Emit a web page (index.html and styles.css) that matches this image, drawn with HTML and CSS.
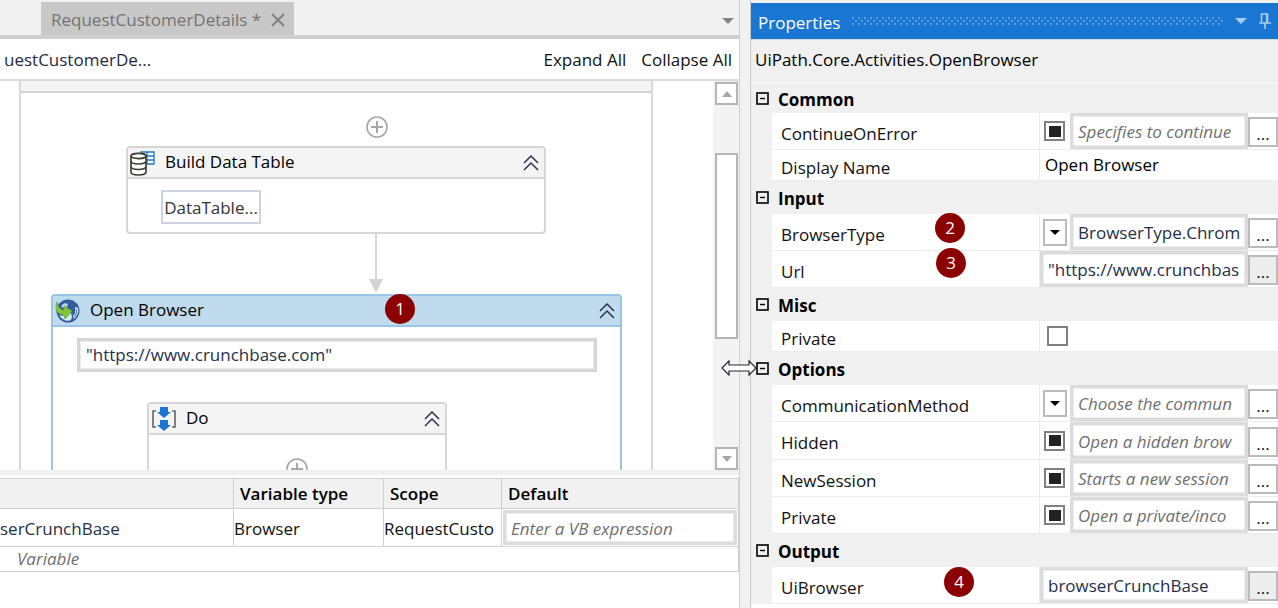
FILE: index.html
```html
<!DOCTYPE html>
<html lang="en">
<head>
<meta charset="utf-8">
<title>Workflow designer</title>
<link rel="stylesheet" href="styles.css">
</head>
<body>
<svg class="defs" aria-hidden="true">
  <symbol id="collapse" viewBox="0 0 16 16"><path d="M1 8 8 1 15 8M1 15 8 8 15 15" fill="none" stroke="#29344f" stroke-width="1.500"/></symbol>
  <symbol id="plus" viewBox="0 0 24 24"><circle cx="12" cy="12" r="10" fill="#fff" stroke="#a6a6a6" stroke-width="1.600"/><path d="M6 12h12M12 6v12" stroke="#a6a6a6" stroke-width="2"/></symbol>
  <symbol id="expander" viewBox="0 0 13 13"><rect x="1" y="1" width="11" height="11" fill="#f0f0f0" stroke="#000" stroke-width="1.600"/><path d="M4 6.500h5" stroke="#000" stroke-width="1.400"/></symbol>
</svg>
<div class="app">
  <main class="designer">
    <div class="tabs">
      <div class="tab"><span>RequestCustomerDetails *</span>
        <button class="plain" aria-label="Close"><svg width="14" height="14" viewBox="0 0 14 14"><path d="M1 1 13 13M13 1 1 13" stroke="#858585" stroke-width="2.200"/></svg></button>
      </div>
      <button class="plain" aria-label="Open tabs"><svg width="12" height="6"><path d="M0 0h12L6 6z" fill="#858585"/></svg></button>
    </div>
    <div class="toolbar">
      <a class="crumb" href="#">uestCustomerDe...</a>
      <button class="plain">Expand All</button>
      <button class="plain">Collapse All</button>
    </div>
    <div class="canvas">
      <div class="viewport">
        <section class="sequence">
          <div class="sequence-head"></div>
          <div class="insert"><button class="plain" aria-label="Add activity"><svg width="24" height="24"><use href="#plus"/></svg></button></div>
          <article class="card data-card">
            <header class="card-head">
              <svg class="card-icon" width="26" height="26" viewBox="0 0 26 26">
                <g fill="#fff" stroke="#1b7ac2"><path d="M11 2h13v12H11zM17 2v12M11 6h13M11 10h13" stroke-width="1.300"/></g>
                <path d="M1 6v16c0 4 15 4 15 0V6" fill="#fff" stroke="#3d3b30" stroke-width="1.600"/>
                <ellipse cx="8.500" cy="6" rx="7.500" ry="2.600" fill="#fff" stroke="#3d3b30" stroke-width="1.600"/>
                <path d="M1 11c0 4 15 4 15 0M1 16.500c0 4 15 4 15 0" fill="none" stroke="#3d3b30" stroke-width="1.600"/>
              </svg>
              <span class="card-title">Build Data Table</span>
              <button class="plain" aria-label="Collapse"><svg width="16" height="16"><use href="#collapse"/></svg></button>
            </header>
            <button class="data-button">DataTable...</button>
          </article>
          <div class="arrow"><svg width="14" height="60"><path d="M7 0v46" stroke="#d6d6d6" stroke-width="2"/><path d="M0 45h14L7 59z" fill="#d4d4d4"/></svg></div>
          <article class="card browser-card">
            <header class="card-head selected">
              <svg class="card-icon" width="26" height="26" viewBox="0 0 26 26">
                <circle cx="13" cy="13" r="11.500" fill="#315c9d"/>
                <path d="M7 7c2-2 4-2 6-1l-1 3-3 1-3-1z" fill="#b9d3ea"/>
                <path d="M4 17c3 2 6 0 10-3l2 1 1 4-1 3c-4 2-9 0-12-5zM20 9l3 1c1 5-1 8-4 11l-1-3 2-3z" fill="#d7e8f3"/>
                <path d="M21 11c1 4 0 6-2 8" fill="none" stroke="#315c9d"/>
                <path d="M2 4c-3 8 1 13 7 13l1 4 7-8-8-5v4C5 12 3 9 2 4z" fill="#86c440" stroke="#5ba32b" stroke-width=".7"/>
              </svg>
              <span class="card-title">Open Browser</span>
              <span class="badge badge-browser">1</span>
              <button class="plain" aria-label="Collapse"><svg width="16" height="16"><use href="#collapse"/></svg></button>
            </header>
            <div class="browser-body">
              <input class="box url-box" aria-label="Address" value="&quot;https://www.crunchbase.com&quot;">
              <article class="card do-card">
                <header class="card-head">
                  <svg class="card-icon" width="26" height="26" viewBox="0 0 26 26">
                    <path d="M5 5H2v16h3M21 5h3v16h-3" fill="none" stroke="#6b6b6b" stroke-width="1.700"/>
                    <path d="M9 1h8v5h3l-7 6-7-6h3zM9 14h8v5h3l-7 6-7-6h3z" fill="#1976d4"/>
                  </svg>
                  <span class="card-title">Do</span>
                  <button class="plain" aria-label="Collapse"><svg width="16" height="16"><use href="#collapse"/></svg></button>
                </header>
                <div class="insert-inner"><button class="plain" aria-label="Add activity"><svg width="24" height="24"><use href="#plus"/></svg></button></div>
              </article>
            </div>
          </article>
        </section>
      </div>
      <div class="scrollbar">
        <button class="scroll-button" aria-label="Scroll up"><svg width="10" height="6"><path d="M0 6h10L5 0z" fill="#a6a6a6"/></svg></button>
        <div class="track"><div class="thumb"></div></div>
        <button class="scroll-button" aria-label="Scroll down"><svg width="10" height="6"><path d="M0 0h10L5 6z" fill="#a6a6a6"/></svg></button>
      </div>
    </div>
    <div class="variables">
      <table>
        <colgroup><col><col class="col-type"><col class="col-scope"><col class="col-default"></colgroup>
        <thead><tr><th></th><th>Variable type</th><th>Scope</th><th>Default</th></tr></thead>
        <tbody>
          <tr class="variable"><td class="ink">serCrunchBase</td><td>Browser</td><td>RequestCusto</td><td class="default-cell"><input class="box" aria-label="Default" placeholder="Enter a VB expression"></td></tr>
          <tr class="create"><td colspan="4">Variable</td></tr>
        </tbody>
      </table>
    </div>
  </main>
  <div class="splitter">
    <svg class="resize" width="36" height="18" viewBox="0 0 36 18"><path d="M1 9 8 2v4h20V2l7 7-7 7v-4H8v4z" fill="#fff" stroke="#29293a" stroke-width="1.200"/></svg>
  </div>
  <aside class="properties">
    <header class="panel-head">
      <h1>Properties</h1>
      <svg class="grip" height="8"><pattern id="dots" width="6" height="6" patternUnits="userSpaceOnUse"><path d="M0 0h2v2H0zM3 3h2v2H3z" fill="#5d9fdf"/></pattern><rect width="100%" height="8" fill="url(#dots)"/></svg>
      <button class="plain" aria-label="Menu"><svg width="12" height="6"><path d="M0 0h12L6 6z" fill="#a9cdf0"/></svg></button>
      <button class="plain" aria-label="Pin"><svg width="12" height="16" viewBox="0 0 12 16"><path d="M2.500 9V1h6v8M0 10h12M6 10v6" fill="none" stroke="#a9cdf0" stroke-width="1.600"/><path d="M8 1v9" stroke="#a9cdf0" stroke-width="2"/></svg></button>
    </header>
    <div class="type-name">UiPath.Core.Activities.OpenBrowser</div>

    <h2 class="group"><svg width="13" height="13"><use href="#expander"/></svg><span>Common</span></h2>
    <div class="prop"><label class="name" for="p1">ContinueOnError</label><div class="value"><input type="checkbox" class="check mixed" aria-label="ContinueOnError state"><input id="p1" class="box" placeholder="Specifies to continue"><button class="more">...</button></div></div>
    <div class="prop short"><label class="name" for="p2">Display Name</label><div class="value"><input id="p2" class="bare" value="Open Browser"></div></div>

    <h2 class="group"><svg width="13" height="13"><use href="#expander"/></svg><span>Input</span></h2>
    <div class="prop"><label class="name" for="p3">BrowserType<span class="badge badge-type">2</span></label><div class="value"><button class="drop" aria-label="Choose BrowserType"><svg width="10" height="5"><path d="M0 0h10L5 5z"/></svg></button><input id="p3" class="box" value="BrowserType.Chrom"><button class="more">...</button></div></div>
    <div class="prop"><label class="name" for="p4">Url<span class="badge badge-url">3</span></label><div class="value"><input id="p4" class="box" value="&quot;https://www.crunchbas"><button class="more filled">...</button></div></div>

    <h2 class="group"><svg width="13" height="13"><use href="#expander"/></svg><span>Misc</span></h2>
    <div class="prop short"><label class="name" for="p5">Private</label><div class="value"><input id="p5" type="checkbox" class="check"></div></div>

    <h2 class="group"><svg width="13" height="13"><use href="#expander"/></svg><span>Options</span></h2>
    <div class="prop"><label class="name" for="p6">CommunicationMethod</label><div class="value"><button class="drop" aria-label="Choose CommunicationMethod"><svg width="10" height="5"><path d="M0 0h10L5 5z"/></svg></button><input id="p6" class="box" placeholder="Choose the commun"><button class="more">...</button></div></div>
    <div class="prop tall"><label class="name" for="p7">Hidden</label><div class="value"><input type="checkbox" class="check mixed" aria-label="Hidden state"><input id="p7" class="box" placeholder="Open a hidden brow"><button class="more">...</button></div></div>
    <div class="prop"><label class="name" for="p8">NewSession</label><div class="value"><input type="checkbox" class="check mixed" aria-label="NewSession state"><input id="p8" class="box" placeholder="Starts a new session"><button class="more">...</button></div></div>
    <div class="prop"><label class="name" for="p9">Private</label><div class="value"><input type="checkbox" class="check mixed" aria-label="Private state"><input id="p9" class="box" placeholder="Open a private/inco"><button class="more">...</button></div></div>

    <h2 class="group"><svg width="13" height="13"><use href="#expander"/></svg><span>Output</span></h2>
    <div class="prop"><label class="name" for="p10">UiBrowser<span class="badge badge-output">4</span></label><div class="value"><input id="p10" class="box" value="browserCrunchBase"><button class="more filled">...</button></div></div>
    <div class="rest"></div>
  </aside>
</div>
</body>
</html>
```
FILE: styles.css
```css
* { box-sizing: border-box; }
body { margin: 0; font: 17px/24px "Open Sans", "Noto Sans", sans-serif; color: #111; background: #f0f0f0; }
button, input { font: inherit; color: inherit; margin: 0; border-radius: 0; }
svg { display: block; flex: none; }
.defs { position: absolute; width: 0; height: 0; }
.plain { border: 0; padding: 0; background: none; flex: none; }
.app { display: grid; grid-template-columns: minmax(0, 1fr) 10px 528px; height: 100vh; overflow: hidden; }

.designer { display: flex; flex-direction: column; min-width: 0; min-height: 0; border-right: 1px solid #cfcfcf; background: #fff; }
.tabs { display: flex; align-items: flex-end; justify-content: space-between; flex: none; height: 39px; padding: 2px 5px 0 41px; background: #f1f1f1; border-bottom: 4px solid #cecece; }
.tabs > .plain { align-self: center; padding-top: 4px; }
.tab { display: flex; align-items: center; gap: 10px; height: 33px; padding: 3px 9px 0 10px; color: #737373; background: #c8c8c8; }
.toolbar { display: flex; align-items: center; gap: 15px; flex: none; height: 42px; padding: 2px 7px 0 4px; border-bottom: 2px solid #d9d9d9; }
.crumb { margin-right: auto; color: #1f2a44; text-decoration: none; }

.canvas { display: flex; flex: 1; min-height: 0; }
.viewport { flex: 1; min-width: 0; overflow: hidden; padding: 0 60px 0 19px; }
.sequence { min-height: 100%; border: solid #d9d9d9; border-width: 0 2px; padding-bottom: 20px; }
.sequence-head { height: 12px; background: #f4f4f4; border-bottom: 2px solid #d3d3d3; }
.insert { display: flex; justify-content: center; padding: 22px 0 7px 81px; }
.card { border: 2px solid #d6d6d6; border-radius: 4px; background: #fff; }
.card-head { position: relative; display: flex; align-items: center; height: 31px; padding: 0 5px 0 2px; background: #f4f4f4; border-bottom: 2px solid #d6d6d6; }
.card-title { flex: 1; margin: -2px 0 0 9px; color: #000; }
.data-card { width: 420px; height: 88px; margin: 0 auto; }
.data-button { display: block; margin: 11px 0 0 33px; width: 100px; height: 34px; padding: 2px 0 0; border: 2px solid #cdd3e3; background: #fff; color: #333; white-space: nowrap; }
.arrow { display: flex; justify-content: center; padding-left: 79px; }
.browser-card { margin: 0 29px 0 30px; border-color: #9ac5e4; }
.card-head.selected { background: #c1dbee; border-color: #9ac5e4; }
.browser-body { padding: 11px 23px 40px 24px; }
.do-card { width: 300px; margin: 30px auto 0 70px; }
.insert-inner { display: flex; justify-content: center; padding: 22px 0 80px; }

.box { display: block; flex: 1; width: 100%; min-width: 0; padding: 0 5px; border: 3px solid #dcdcdc; box-shadow: inset 0 0 0 1px #ececec; background: #fff; color: #24304a; outline: 0; }
.url-box { height: 34px; padding: 0 6px 2px; border-color: #d6d6d6; }
.box::placeholder { color: #6f6f6f; font-style: italic; opacity: 1; }

.scrollbar { display: flex; flex-direction: column; flex: none; width: 26px; padding: 1px 1px 0 2px; background: #f3f3f3; }
.scroll-button { display: grid; place-items: center; width: 23px; height: 23px; padding: 0; border: 2px solid #b5b5b5; background: #fff; }
.track { flex: 1; display: grid; grid-template-rows: 48fr 186fr 108fr; }
.thumb { grid-row: 2; width: 23px; border: 2px solid #b5b5b5; background: #fff; }

.variables { flex: none; height: 138px; border-top: 5px solid #f0f0f0; padding-top: 3px; }
table { width: 100%; border-collapse: collapse; table-layout: fixed; border-top: 1px solid #cfcfcf; }
.col-type { width: 150px; }
.col-scope { width: 118px; }
.col-default { width: 237px; }
th, td { padding: 0 1px 0 0; text-align: left; white-space: nowrap; overflow: hidden; border-right: 1px solid #cfcfcf; }
th { height: 30px; padding-left: 6px; font-weight: 600; background: #f1f1f1; border-bottom: 1px solid #cfcfcf; color: #000; }
.variable td { height: 37px; padding-top: 3px; border-bottom: 1px solid #d0d0d0; }
.variable .default-cell { padding: 1px; }
.default-cell .box { height: 35px; padding-top: 2px; }
.ink { color: #24304a; }
.create td { height: 25px; padding-left: 17px; font-style: italic; color: #6f6f6f; border-bottom: 1px solid #d0d0d0; }

.splitter { position: relative; background: #f1f1f1; }
.resize { position: absolute; z-index: 3; left: -19px; top: 359px; }
.badge { position: absolute; display: grid; place-items: center; width: 30px; height: 30px; border-radius: 50%; background: #8b0000; color: #fff; z-index: 2; }
.badge-browser { left: 332px; top: -2px; }
.badge-type { left: 163px; top: -1px; }
.badge-url { left: 164px; top: -3px; }
.badge-output { left: 172px; top: 0; }

.properties { display: flex; flex-direction: column; min-width: 0; padding-top: 3px; border-left: 1px solid #c8c8c8; background: #f0f0f0; }
.panel-head { display: flex; align-items: center; flex: none; height: 37px; padding: 0 7px; color: #fff; background: #1976d2; border-bottom: 1px solid #d8d8d8; }
.panel-head h1 { margin: 0; font-size: 17px; font-weight: 400; line-height: 24px; padding-top: 4px; }
.grip { flex: 1; min-width: 0; margin: 0 11px 0 12px; }
.panel-head .plain + .plain { margin-left: 12px; }
.type-name { flex: none; height: 43px; padding: 8px 4px; border-bottom: 1px solid #fafafa; color: #000; }
.group { display: flex; align-items: center; flex: none; gap: 9px; height: 33px; margin: 0; padding-left: 5px; font-size: 17px; line-height: 24px; font-weight: 700; color: #000; }
.group span { padding-top: 3px; }
.type-name + .group { height: 30px; }
.prop { display: grid; grid-template-columns: 268px minmax(0, 1fr); flex: none; height: 37px; margin-left: 21px; background: #fff; border-bottom: 1px solid #ececec; }
.prop.short { height: 31px; }
.prop.tall { height: 38px; }
.name { position: relative; display: flex; align-items: center; padding: 5px 0 0 9px; border-right: 1px solid #ececec; }
.value { display: flex; align-items: center; min-width: 0; }
.value .box { align-self: stretch; padding-top: 2px; }
.bare { width: 100%; padding: 0 5px; border: 0; background: none; outline: 0; color: #000; }
.check { appearance: none; display: grid; place-items: center; flex: none; width: 21px; height: 20px; margin: 0 5px 0 4px; border: 2px solid #808080; background: #fff; }
.short .check { margin-left: 7px; }
.mixed::before { content: ""; width: 12px; height: 11px; background: #222; }
.drop { display: grid; place-items: center; flex: none; width: 24px; height: 27px; margin: 0 3px; padding: 0; border: 2px solid #bbb; background: #fff; }
.more { flex: none; align-self: flex-end; width: 30px; height: 30px; margin-bottom: 2px; padding: 4px 0 0; line-height: 20px; border: 2px solid #bbb; background: #fff; }
.more.filled { background: #ededed; }
.rest { flex: 1; background: #fff; }
```
